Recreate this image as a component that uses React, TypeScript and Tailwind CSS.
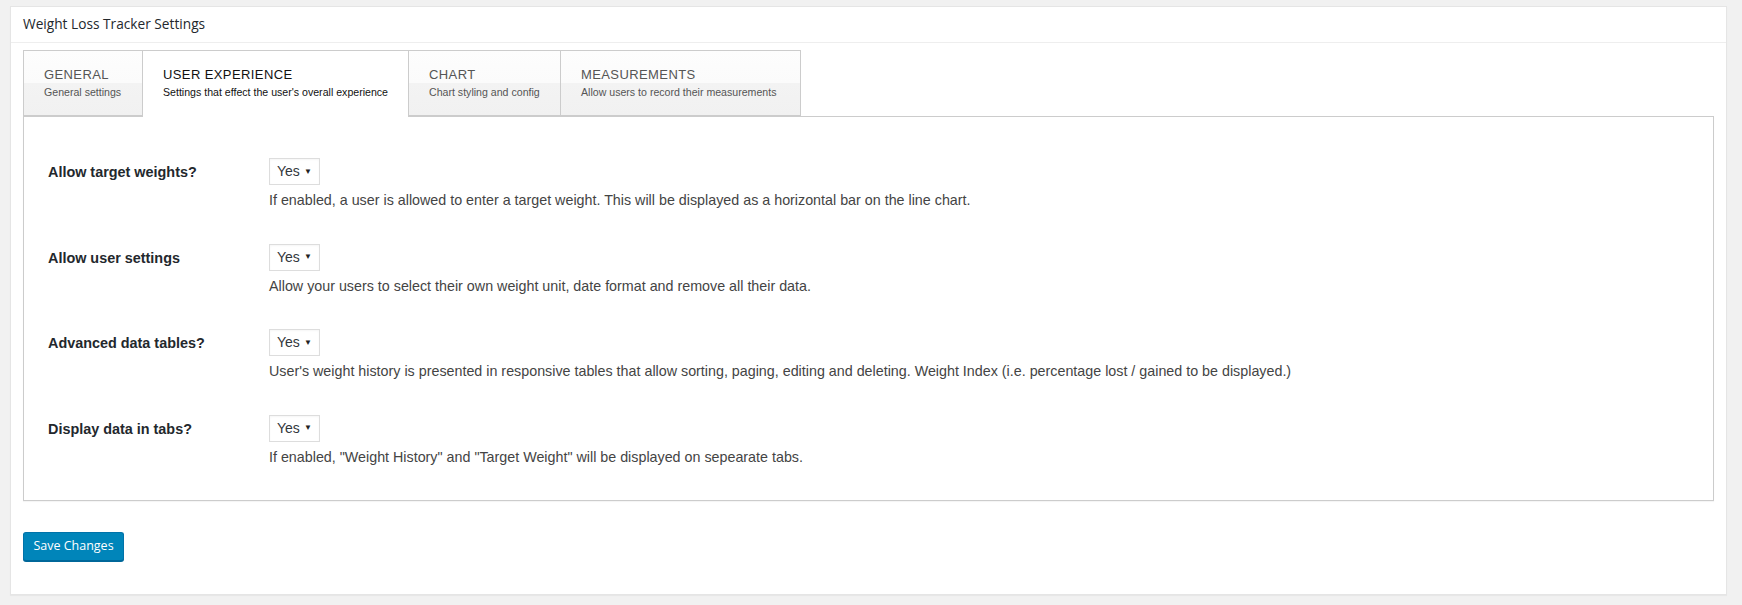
import { useState } from "react";

const tabs = [
  { title: "General", sub: "General settings", width: "w-[120px]" },
  { title: "User Experience", sub: "Settings that effect the user's overall experience", width: "w-[267px]" },
  { title: "Chart", sub: "Chart styling and config", width: "w-[153px]" },
  { title: "Measurements", sub: "Allow users to record their measurements", width: "w-[241px]" },
];

const rows = [
  {
    label: "Allow target weights?",
    help: "If enabled, a user is allowed to enter a target weight. This will be displayed as a horizontal bar on the line chart.",
  },
  {
    label: "Allow user settings",
    help: "Allow your users to select their own weight unit, date format and remove all their data.",
  },
  {
    label: "Advanced data tables?",
    help: "User's weight history is presented in responsive tables that allow sorting, paging, editing and deleting. Weight Index (i.e. percentage lost / gained to be displayed.)",
  },
  {
    label: "Display data in tabs?",
    help: "If enabled, \"Weight History\" and \"Target Weight\" will be displayed on sepearate tabs.",
  },
];

function YesSelect() {
  return (
    <div className="flex h-[27px] w-[51px] items-center justify-between border border-[#dddddd] bg-white pl-[7px] pr-[7px] text-[14px] text-[#32373c] shadow-[inset_0_1px_2px_rgba(0,0,0,0.04)]">
      <span>Yes</span>
      <span className="text-[8px] text-[#222]">▼</span>
    </div>
  );
}

export default function App() {
  const [active, setActive] = useState(1);

  return (
    <div className="min-h-[605px] bg-[#f1f1f1] pl-[10px] pr-[15px] pt-[6px] font-['Liberation_Sans',Arial,sans-serif]">
      <div className="h-[589px] border border-[#e5e5e5] bg-white shadow-[0_1px_1px_rgba(0,0,0,0.04)]">
        <div className="flex h-[36px] items-center border-b border-[#eeeeee] pl-[12px] font-['Open_Sans',sans-serif] text-[13.7px] text-[#23282d]">
          Weight Loss Tracker Settings
        </div>

        <div className="px-[12px] pt-[7px]">
          <div className="flex">
            {tabs.map((t, i) => (
              <div
                key={t.title}
                onClick={() => setActive(i)}
                className={
                  (i === active
                    ? "relative z-10 -mb-px h-[67px] border-x border-t border-[#cccccc] bg-white text-[#111]"
                    : "h-[66px] border border-[#cccccc] bg-[linear-gradient(#fdfdfd_0%,#fbfbfb_50%,#f3f3f3_50%,#f1f1f1_100%)] text-[#555]") +
                  " " +
                  t.width +
                  " -ml-px first:ml-0 cursor-pointer pl-[20px] pt-[15px] text-left"
                }
              >
                <div className="text-[13px] uppercase leading-[18px] tracking-[0.4px]">{t.title}</div>
                <div className="mt-[1px] text-[10.6px] leading-[14px]">{t.sub}</div>
              </div>
            ))}
          </div>

          <div className="h-[385px] border border-[#cccccc] pl-[24px] pt-[41px] shadow-[0_1px_1px_rgba(0,0,0,0.04)]">
            {rows.map((r) => (
              <div key={r.label} className="mb-[35px] flex">
                <div className="w-[221px] pt-[6px] text-[14.4px] font-bold leading-[16px] text-[#23282d]">
                  {r.label}
                </div>
                <div>
                  <YesSelect />
                  <p className="mt-[7px] text-[14.3px] leading-[16.5px] text-[#444]">{r.help}</p>
                </div>
              </div>
            ))}
          </div>

          <button className="mt-[31px] h-[29px] w-[101px] rounded-[3px] border border-[#0073aa] border-b-[#006799] bg-[#0085ba] font-['Open_Sans',sans-serif] text-[12.5px] text-white shadow-[0_1px_0_#006799]">
            Save Changes
          </button>
        </div>
      </div>
    </div>
  );
}
